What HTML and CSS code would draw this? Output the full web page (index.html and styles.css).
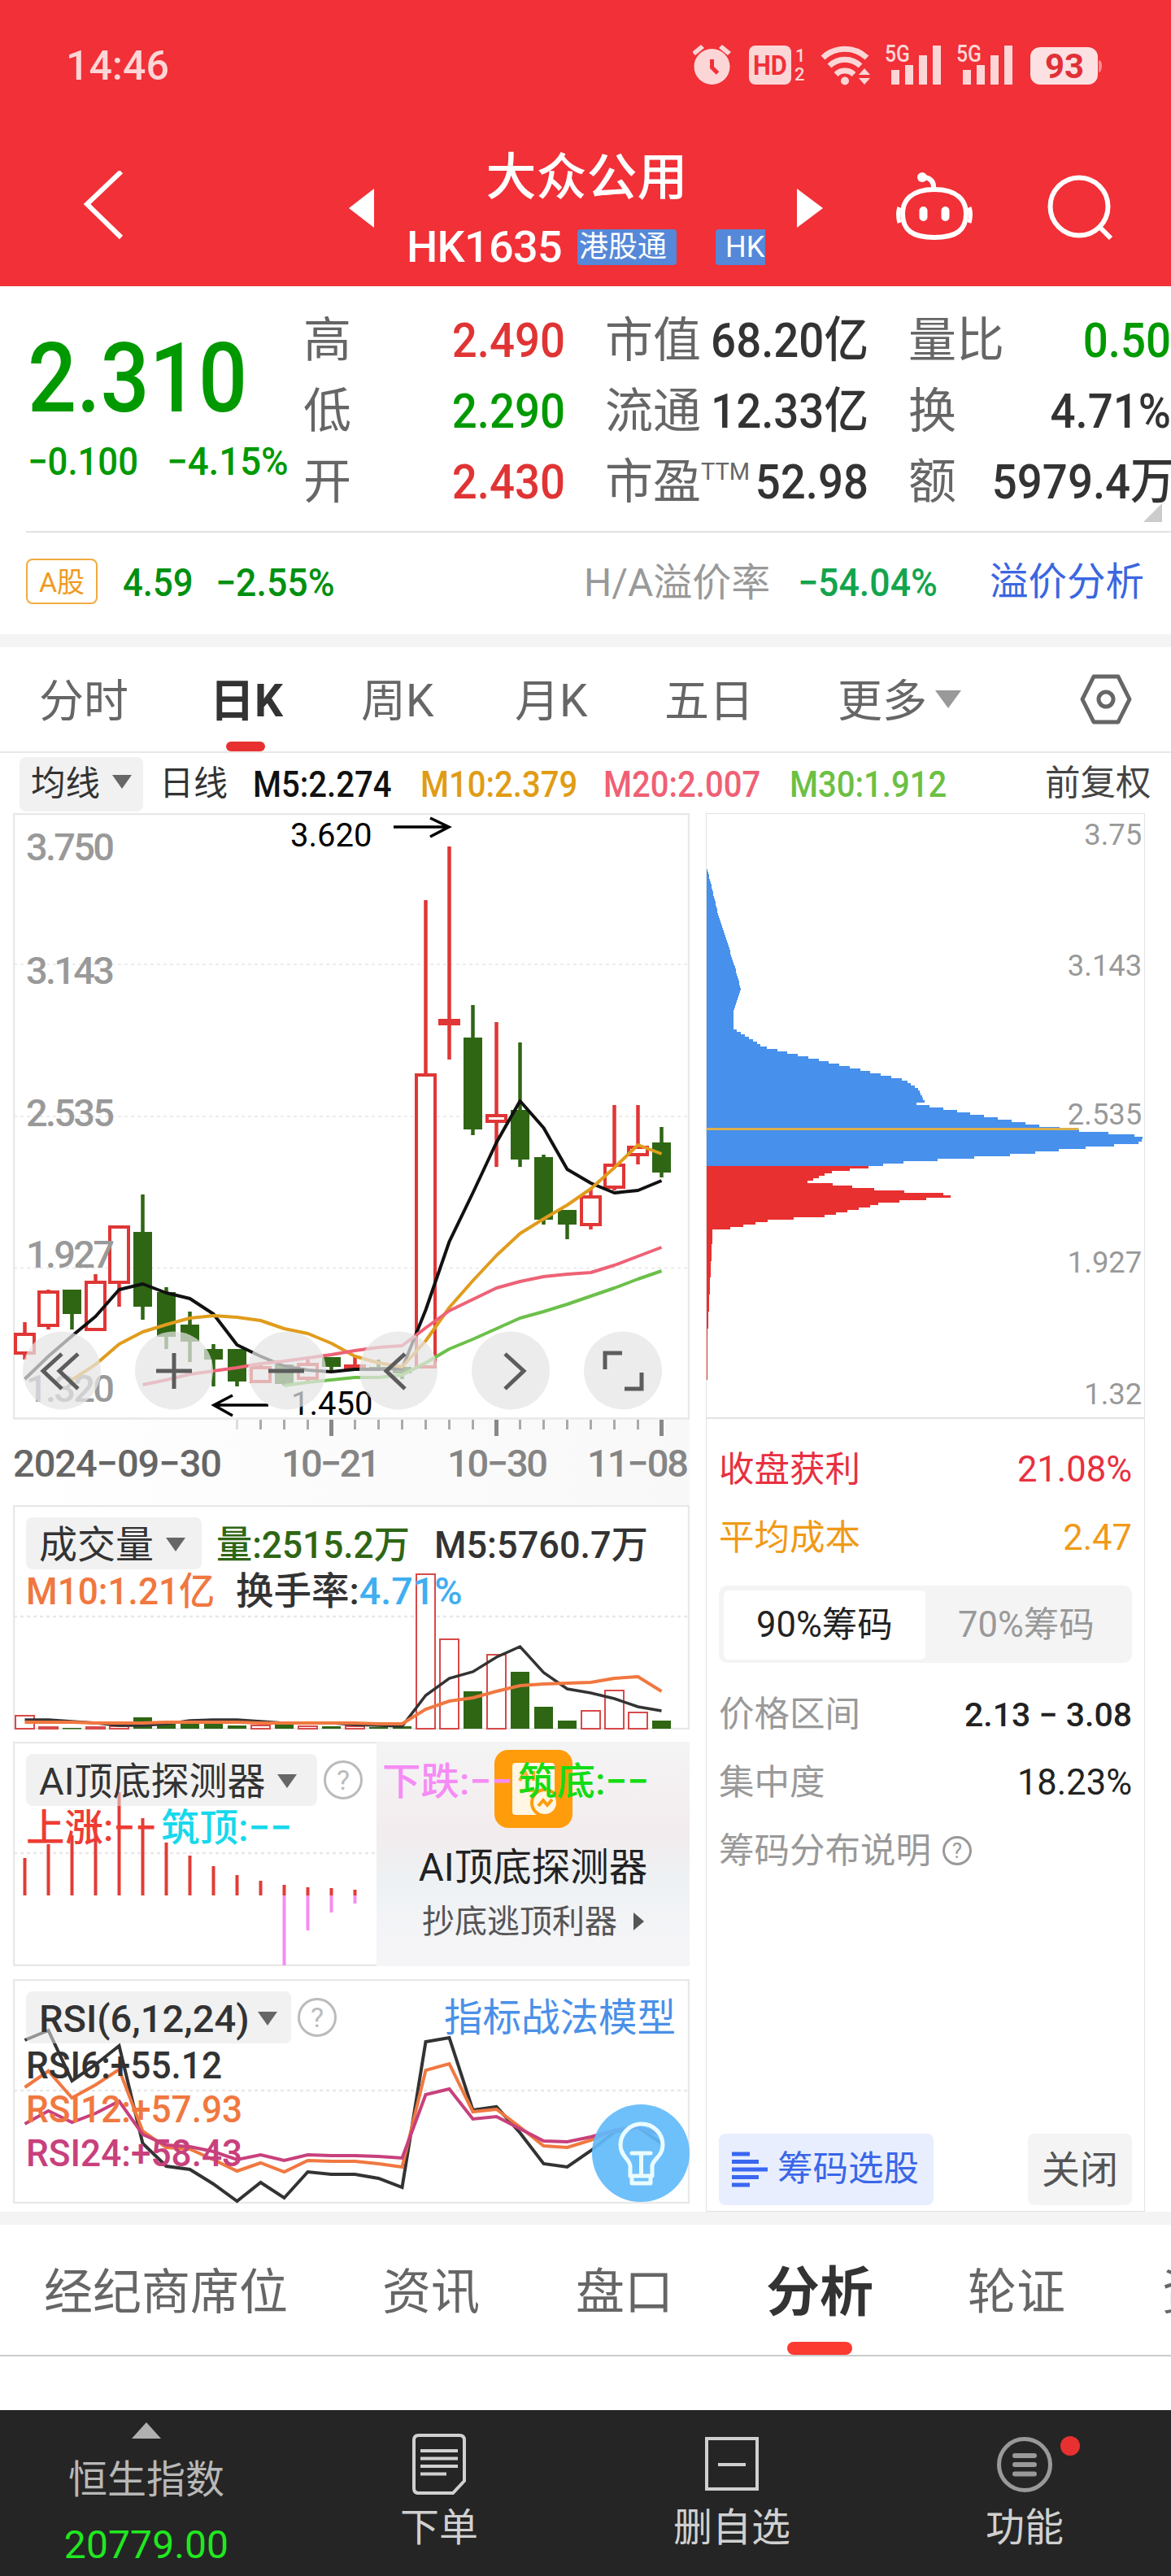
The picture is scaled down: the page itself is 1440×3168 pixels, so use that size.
FILE: index.html
```html
<!DOCTYPE html>
<html lang="zh-CN">
<head>
  <meta charset="UTF-8">
  <title>大众公用 HK1635</title>
  <meta name="viewport" content="width=device-width, initial-scale=1.0">
  <link rel="stylesheet" href="styles.css">
</head>
<body>

<header>
  <div class="status">
    <span class="clock">14:46</span>
    <svg class="status-icons" width="504" height="72" viewBox="852 44 504 72">
      <g fill="#fcd6d7">
        <circle cx="875.500" cy="82" r="22"/>
        <path d="M851 64l11-9 4 4-11 9zM899 64l-11-9-4 4 11 9z"/>
        <rect x="921" y="56" width="52" height="48" rx="8"/>
        <text class="tiny" x="978" y="76" font-size="22">1</text>
        <text class="tiny" x="977" y="99" font-size="22">2</text>
        <circle cx="1039" cy="99.500" r="5"/>
        <path d="M1063 84l7 8h-14zM1063 104l7-8h-14z"/>
        <text class="tiny" x="1088" y="76" font-size="29" font-weight="700" textLength="31" lengthAdjust="spacingAndGlyphs">5G</text>
        <path d="M1096 86h10v18h-10zM1113 80h10v24h-10zM1130 68h10v36h-10zM1147 56h10v48h-10z"/>
        <text class="tiny" x="1176" y="76" font-size="29" font-weight="700" textLength="31" lengthAdjust="spacingAndGlyphs">5G</text>
        <path d="M1184 86h10v18h-10zM1201 80h10v24h-10zM1218 68h10v36h-10zM1235 56h10v48h-10z"/>
      </g>
      <path d="M875.500 73v10l7 7" fill="none" stroke="#f13037" stroke-width="5"/>
      <text class="tiny heavy" x="926" y="92" font-size="33" fill="#f13037" textLength="42" lengthAdjust="spacingAndGlyphs">HD</text>
      <g fill="none" stroke="#fcd6d7" stroke-width="7">
        <path d="M1012 71a39 39 0 0 1 54 0M1020 81a27 27 0 0 1 38 0M1028 91.500a16 16 0 0 1 22 0"/>
      </g>
      <rect x="1267" y="58" width="83" height="46" rx="12" fill="#fde0e1"/>
      <path d="M1351 74q4 0 4 7t-4 8z" fill="#f88d91"/>
      <text class="tiny heavy" x="1285" y="96" font-size="42" fill="#e03038" textLength="48">93</text>
    </svg>
  </div>

  <div class="nav">
    <div class="back">
      <svg width="52" height="92" viewBox="100 211 52 92"><path d="M148 212L106 252L148 293" fill="none" stroke="#fff" stroke-width="6"/></svg>
    </div>
    <svg width="32" height="50" viewBox="0 0 32 50"><path d="M0 25L31 1V49z" fill="#fff"/></svg>
    <div class="stock">
      <h1>大众公用</h1>
      <div class="code"><span>HK1635</span><em>港股通</em><em class="hk">HK</em></div>
    </div>
    <svg width="32" height="50" viewBox="0 0 32 50"><path d="M32 25L0 1V49z" fill="#fff"/></svg>
    <svg width="96" height="88" viewBox="1100 212 96 88">
      <g fill="none" stroke="#fff" stroke-width="6">
        <path d="M1148 233C1177 233 1187 247 1187 263C1187 283 1175 292 1148 292S1109 283 1109 263C1109 247 1119 233 1148 233zM1147 232Q1148 220 1136 218"/>
        <path d="M1105 255q-3 8 0 19M1191 255q3 8 0 19" stroke-width="5"/>
        <path d="M1134.500 259v8M1161.500 259v8" stroke-width="10" stroke-linecap="round"/>
      </g>
      <circle cx="1133" cy="218" r="6" fill="#fff"/>
    </svg>
    <svg width="84" height="84" viewBox="1286 214 84 84">
      <g fill="none" stroke="#fff" stroke-width="6"><circle cx="1326" cy="254" r="35.500"/><path d="M1351 279L1365 293"/></g>
    </svg>
  </div>
</header>

<section class="quote">
  <div class="price">
    <strong class="din">2.310</strong>
    <p><span class="din">−0.100</span><span class="din pct">−4.15%</span></p>
  </div>
  <dl class="stats">
    <dt>高</dt><dd class="up">2.490</dd><dt>市值</dt><dd>68.20亿</dd><dt>量比</dt><dd class="down">0.50</dd>
    <dt>低</dt><dd class="down">2.290</dd><dt>流通</dt><dd>12.33亿</dd><dt>换</dt><dd>4.71%</dd>
    <dt>开</dt><dd class="up">2.430</dd><dt>市盈<sup>TTM</sup></dt><dd>52.98</dd><dt>额</dt><dd>5979.4万</dd>
  </dl>
  <i class="corner"></i>
</section>

<section class="premium">
  <span class="badge">A股</span>
  <span class="din">4.59</span>
  <span class="din pct">−2.55%</span>
  <span class="label">H/A溢价率</span>
  <span class="din rate">−54.04%</span>
  <a>溢价分析</a>
</section>

<nav class="periods">
  <span>分时</span><span class="on">日K</span><span>周K</span><span>月K</span><span>五日</span><span>更多<i class="caret light"></i></span>
  <svg width="66" height="64" viewBox="0 0 66 64"><g fill="none" stroke="#666" stroke-width="5" stroke-linejoin="round"><path d="M18 4H48L62 32L48 60H18L4 32z"/><circle cx="33" cy="32" r="9"/></g></svg>
</nav>

<div class="ma-row">
  <button>均线<i class="caret"></i></button>
  <span class="line">日线</span>
  <span class="din m5">M5:2.274</span>
  <span class="din m10">M10:2.379</span>
  <span class="din m20">M20:2.007</span>
  <span class="din m30">M30:1.912</span>
  <span class="adj">前复权</span>
</div>

<main>
  <div class="charts">
    <svg class="kline" id="kline" width="832" height="851" viewBox="16 1000 832 851">
      <defs>
        <linearGradient id="fade"><stop offset="0" stop-color="#fff"/><stop offset="1" stop-color="#f8f8f8"/></linearGradient>
      </defs>
      <rect x="16" y="1746" width="832" height="105" fill="url(#fade)"/>
      <rect x="17" y="1001" width="830" height="743.500" fill="#fff" stroke="#e8e8e8" stroke-width="2.500"/>
      <path d="M17 1186H847M17 1373H847M17 1559.500H847" stroke="#e6e6e6" stroke-width="1.500" stroke-dasharray="4 4"/>
      <g id="candles"></g>
      <g class="axis-label">
        <text x="32" y="1058" textLength="109">3.750</text>
        <text x="32" y="1210" textLength="109">3.143</text>
        <text x="32" y="1385" textLength="109">2.535</text>
        <text x="32" y="1559" textLength="109">1.927</text>
        <text x="32" y="1724" textLength="109">1.320</text>
      </g>
      <g id="averages" fill="none" stroke-linejoin="round"></g>
      <g class="extreme">
        <text x="357" y="1041">3.620</text>
        <text x="358" y="1740">1.450</text>
        <path d="M484 1017H552M529 1006L552 1017L529 1029M330 1728H263M286 1716L263 1728L286 1741"/>
      </g>
      <g id="ticks"></g>
      <g class="date">
        <text x="16" y="1816" textLength="257" fill="#666">2024−09−30</text>
        <text x="346" y="1816" textLength="122">10−21</text>
        <text x="550" y="1816" textLength="124">10−30</text>
        <text x="722" y="1816" textLength="125">11−08</text>
      </g>
      <g class="tools">
        <circle cx="76" cy="1685.500" r="48"/><circle cx="214" cy="1685.500" r="48"/><circle cx="353" cy="1685.500" r="48"/>
        <circle cx="490" cy="1685.500" r="48"/><circle cx="628" cy="1685.500" r="48"/><circle cx="766" cy="1685.500" r="48"/>
        <path d="M76 1665L53 1686L76 1708M96 1665L73 1686L96 1708"/>
        <path d="M192 1686H236M214 1664V1708M330 1686H374"/>
        <path d="M498 1665L475 1686L498 1708M621 1665L644 1686L621 1708"/>
        <path d="M744 1684V1664H765M768 1708H789V1688"/>
      </g>
    </svg>

    <div class="panel volume">
      <svg id="volume" width="832" height="276" viewBox="16 0 832 276"></svg>
      <div class="legend">
        <p><button>成交量<i class="caret"></i></button><span class="din vol">量:2515.2万</span><span class="din wide">M5:5760.7万</span></p>
        <p class="second"><span class="din orange">M10:1.21亿</span><span class="din turnover">换手率:<b>4.71%</b></span></p>
      </div>
    </div>

    <div class="panel detector">
      <svg id="detector" width="832" height="276" viewBox="16 0 832 276"></svg>
      <div class="promo">
        <svg width="96" height="96" viewBox="0 0 96 96">
          <rect width="96" height="96" rx="17" fill="#ff9c0c"/>
          <rect x="22" y="16" width="52" height="64" rx="4" fill="#fff6e4"/>
          <path d="M31 38l6-12 6 12M48 26v12M31 50h18" stroke="#ffab33" stroke-width="4" fill="none"/>
          <circle cx="62" cy="65" r="16" fill="#fff6e4" stroke="#ff9c0c" stroke-width="4"/>
          <path d="M54 69l6-7 5 6 6-7" stroke="#ff9c0c" stroke-width="4" fill="none"/>
        </svg>
        <h3>AI顶底探测器</h3>
        <p>抄底逃顶利器<i></i></p>
      </div>
      <div class="legend">
        <p><button>AI顶底探测器<i class="caret"></i></button><i class="help">?</i><span class="din fall">下跌:−−</span><span class="din bottom">筑底:−−</span></p>
        <p class="second"><span class="din rise">上涨:−−</span><span class="din top">筑顶:−−</span></p>
      </div>
    </div>

    <div class="panel rsi">
      <svg id="rsi" width="832" height="276" viewBox="16 0 832 276"></svg>
      <div class="legend">
        <p><button><span>RSI(6,12,24)</span><i class="caret"></i></button><i class="help">?</i><a>指标战法模型</a></p>
        <p class="second"><span class="din">RSI6:+55.12</span></p>
        <p class="second"><span class="din orange">RSI12:+57.93</span></p>
        <p class="second"><span class="din pink">RSI24:+58.43</span></p>
      </div>
      <svg class="bulb" width="120" height="120" viewBox="0 0 120 120">
        <circle cx="60" cy="60" r="60" fill="#62bbfb" opacity=".92"/>
        <g fill="none" stroke="#eafcff" stroke-width="5" stroke-linecap="round" stroke-linejoin="round">
          <path d="M47 88V76C47 68 35 64 35 50A26 26 0 0 1 87 50C87 64 74 68 74 76V88zM49 88V97H72V88"/>
          <path d="M49 60H72M60.500 60V85"/>
        </g>
      </svg>
    </div>
  </div>

  <aside>
    <svg id="chips" width="540" height="745" viewBox="0 0 540 745">
      <g class="chip-label">
        <text x="537" y="39">3.75</text><text x="537" y="201">3.143</text><text x="537" y="384">2.535</text>
        <text x="537" y="567">1.927</text><text x="537" y="729">1.32</text>
      </g>
    </svg>
    <div class="info">
      <p class="red"><span>收盘获利</span><span>21.08%</span></p>
      <p class="amber"><span>平均成本</span><span>2.47</span></p>
      <div class="switch"><span class="on">90%筹码</span><span>70%筹码</span></div>
      <p><span>价格区间</span><b class="range">2.13 − 3.08</b></p>
      <p><span>集中度</span><b class="thin">18.23%</b></p>
      <p><span>筹码分布说明<i class="help">?</i></span></p>
      <div class="actions">
        <button class="pick">
          <svg width="44" height="44" viewBox="0 0 44 44"><path d="M0 3H22M0 12.500H33M0 22H44M0 31.500H33M0 41H22" stroke="#3a66f0" stroke-width="5"/></svg>筹码选股
        </button>
        <button>关闭</button>
      </div>
    </div>
  </aside>
</main>

<nav class="sections">
  <span>经纪商席位</span><span>资讯</span><span>盘口</span><span class="on">分析</span><span>轮证</span><span>资金</span>
</nav>

<footer>
  <div class="index"><i></i><span>恒生指数</span><b>20779.00</b></div>
  <div>
    <svg width="66" height="76" viewBox="0 0 66 76"><g fill="none" stroke="#d0d0d0" stroke-width="4"><path d="M8 2H58Q64 2 64 8V58L50 73H8Q2 73 2 67V8Q2 2 8 2z"/><path d="M10 21H56M10 30.500H56M10 40H56M10 49.500H42"/></g></svg>
    <span>下单</span>
  </div>
  <div>
    <svg width="66" height="76" viewBox="0 0 66 76"><g fill="none" stroke="#d0d0d0" stroke-width="4"><path d="M2 6H64V68H2zM16 38H50"/></g></svg>
    <span>删自选</span>
  </div>
  <div>
    <svg width="138" height="76" viewBox="-36 0 138 76"><circle cx="33" cy="38" r="31.500" fill="none" stroke="#999" stroke-width="5"/><path d="M21 27H45M21 38H45M21 49.500H45" stroke="#999" stroke-width="6" stroke-linecap="round"/><circle cx="89" cy="15" r="12" fill="#e83030"/></svg>
    <span>功能</span>
  </div>
</footer>

<script src="script.js"></script>
</body>
</html>
```
FILE: styles.css
```css
* {
  box-sizing: border-box;
}
body {
  margin: 0;
  width: 1440px;
  height: 3168px;
  overflow: hidden;
  background: #fff;
  color: #333;
  font-family: Roboto, "Noto Sans CJK SC", sans-serif;
  font-size: 48px;
  line-height: 1;
}
h1, h3, p, dl, dd {
  margin: 0;
}
svg {
  display: block;
}
i, em {
  font-style: normal;
}
button {
  border: 0;
  padding: 0;
  font: inherit;
  color: inherit;
  background: rgba(229, 229, 229, 0.55);
  border-radius: 8px;
}

/* narrow figures */
.din {
  display: inline-block;
  font-weight: 500;
  white-space: nowrap;
  transform: scaleX(0.91);
  transform-origin: left;
}

header {
  height: 352px;
  background: #f13037;
  color: #fff;
}
.status {
  display: flex;
  justify-content: space-between;
  align-items: center;
  height: 160px;
  padding: 0 84px 0 81px;
}
.clock {
  padding-top: 1px;
  font-size: 50px;
  font-weight: 500;
  color: #fcd6d7;
}
.tiny {
  font-family: Roboto, sans-serif;
  font-weight: 500;
}
.heavy {
  font-weight: 700;
}
.nav {
  display: grid;
  grid-template-columns: 429px 73px 478px 121px 186px 153px;
  align-items: center;
  height: 192px;
}
.back {
  padding-left: 101px;
}
.stock {
  width: 439px;
}
.stock h1 {
  margin-bottom: 16px;
  font-size: 62px;
  line-height: 80px;
  font-weight: 500;
  text-align: center;
}
.code {
  display: flex;
  align-items: center;
  height: 58px;
  overflow: hidden;
  white-space: nowrap;
}
.code span {
  width: 208px;
  margin-left: -2px;
  margin-right: 2px;
  font-size: 54px;
  font-weight: 500;
  letter-spacing: -0.7px;
  line-height: 58px;
}
.code em {
  width: 122px;
  height: 44px;
  margin-right: 48px;
  padding-left: 2px;
  border-radius: 4px;
  background: #5588d8;
  font-size: 36px;
  line-height: 44px;
}
.code .hk {
  flex: 1;
  margin: 0;
  padding-left: 12px;
  overflow: hidden;
  border-radius: 4px 0 0 4px;
}

.quote {
  display: grid;
  grid-template-columns: 341px 1fr;
  height: 303px;
  margin-left: 32px;
  padding-top: 22px;
  border-bottom: 2px solid #e2e2e2;
  position: relative;
}
.price {
  padding-top: 32px;
  color: #009900;
}
.price strong {
  font-size: 119px;
  line-height: 119px;
  transform: scaleX(0.89);
}
.price p {
  display: flex;
  gap: 20px;
  margin-top: 19px;
  font-size: 48px;
}
.price .din {
  margin-left: 2px;
}
.price .pct {
  transform: scaleX(0.95);
}
.stats {
  display: grid;
  grid-template-columns: 82px 240px 134px 239px 130px 242px;
  grid-auto-rows: 87px;
  font-size: 60px;
  line-height: 90px;
  white-space: nowrap;
}
.stats dt {
  font-size: 59px;
  color: #666;
}
.stats dt:nth-of-type(3n+2), .stats dt:nth-of-type(3n) {
  padding-left: 49px;
}
.stats sup {
  font-size: 29px;
  line-height: 0;
  vertical-align: 23px;
}
.stats dd {
  font-weight: 500;
  text-align: right;
  transform: scaleX(0.91);
  transform-origin: right;
}
.stats .up {
  color: #e03434;
}
.stats .down {
  color: #009900;
}
.corner {
  position: absolute;
  right: 11px;
  bottom: 11px;
  border-left: 23px solid transparent;
  border-bottom: 23px solid #ccc;
}

.premium {
  display: grid;
  grid-template-columns: 119px 114px 453px 263px 236px 1fr;
  align-items: center;
  height: 125px;
  padding: 0 0 1px 32px;
  color: #009010;
  white-space: nowrap;
}
.badge {
  width: 88px;
  height: 56px;
  margin-bottom: 5px;
  border: 2px solid #f0ab40;
  border-radius: 8px;
  color: #f09a20;
  font-size: 34px;
  line-height: 54px;
  text-align: center;
}
.premium .pct {
  transform: scaleX(0.93);
}
.premium .label {
  color: #999;
}
.premium .rate {
  color: #13a44e;
  transform: scaleX(0.93);
}
.premium a {
  color: #3b66e0;
  font-size: 47.5px;
}

.periods {
  display: grid;
  grid-template-columns: 214px 182px 189px 184px 213px 297px 66px;
  align-items: center;
  height: 146px;
  padding-left: 48px;
  border-top: 16px solid #f4f4f4;
  border-bottom: 2px solid #e8e8e8;
  color: #666;
  font-size: 55px;
}
.periods span {
  height: 128px;
  line-height: 133px;
}
.periods .on {
  position: relative;
  left: -4px;
  color: #333;
  font-weight: 700;
}
.periods .on::after, .sections .on::after {
  content: "";
  position: absolute;
  left: 20px;
  bottom: 0;
  width: 48px;
  height: 12px;
  border-radius: 6px;
  background: #e83030;
}
.caret {
  display: inline-block;
  margin-left: 15px;
  vertical-align: 8px;
  border: 12px solid transparent;
  border-top: 17px solid #666;
  border-bottom: 0;
}
.caret.light {
  margin-left: 10px;
  vertical-align: 10px;
  border-width: 22px 16px 0;
  border-top-color: #999;
}

.ma-row {
  display: grid;
  grid-template-columns: 172px 115px 206px 225px 229px 314px 1fr;
  align-items: center;
  height: 74px;
  padding: 2px 0 0 24px;
  font-size: 44px;
  white-space: nowrap;
}
.ma-row button {
  width: 152px;
  height: 67px;
  font-size: 42.5px;
}
.ma-row .line {
  font-size: 42px;
}
.ma-row .din {
  padding-top: 2px;
}
.m5 { color: #111; }
.m10 { color: #e09c14; }
.m20 { color: #f06074; }
.m30 { color: #6cc044; }
.adj {
  font-size: 43.5px;
  color: #444;
}

main {
  display: grid;
  grid-template-columns: 852px 540px;
  height: 1720px;
  padding-left: 16px;
}
.axis-label text, .date text {
  font-family: Roboto, sans-serif;
  font-weight: 500;
  font-size: 47px;
  fill: #999;
}
.date text {
  fill: #858585;
}
.date text:first-child {
  fill: #666;
}
.extreme text {
  font-size: 40px;
}
.extreme path {
  fill: none;
  stroke: #000;
  stroke-width: 3.5;
}
.tools circle {
  fill: rgba(228, 228, 228, 0.72);
}
.tools path {
  fill: none;
  stroke: #5c5c5c;
  stroke-width: 5;
}
.panel {
  display: grid;
  width: 832px;
  height: 276px;
}
.panel > * {
  grid-area: 1 / 1;
}
.detector {
  margin-top: 15px;
}
.rsi {
  margin-top: 16px;
}
.legend {
  padding: 15px 0 0 16px;
  font-size: 47px;
  white-space: nowrap;
}
.legend .din {
  transform: scaleX(0.94);
}
.legend p {
  display: flex;
  align-items: center;
  height: 64px;
}
.legend p > span, .legend p > a {
  padding-top: 3px;
}
.legend .second {
  height: 54px;
}
.legend .second .din {
  margin-top: -5px;
}
.legend button {
  height: 64px;
  width: 216px;
  margin-right: 18px;
  padding: 2px 0 0 16px;
  text-align: left;
}
.volume .vol {
  width: 268px;
  color: #2f6614;
}
.legend .wide {
  transform: scaleX(0.96);
}
.volume .second .orange {
  width: 258px;
}
.legend .turnover {
  transform: scaleX(0.99);
}
.volume b {
  font-weight: 500;
  color: #40aef0;
}
.orange { color: #f07840; }
.pink { color: #c8407c; }
.detector button {
  width: 358px;
  margin-right: 8px;
}
.help {
  display: inline-block;
  width: 48px;
  height: 48px;
  border: 3px solid #bbb;
  border-radius: 50%;
  color: #bbb;
  font-size: 34px;
  line-height: 43px;
  text-align: center;
}
.legend .fall, .legend .bottom, .legend .rise, .legend .top {
  transform: scaleX(1.01);
}
.detector .fall {
  width: 167px;
  margin-left: 24px;
  color: #f58cf5;
}
.bottom { color: #14dc14; }
.detector .rise {
  width: 166px;
  color: #ee3c34;
}
.top { color: #18d8ec; }
.promo {
  justify-self: end;
  display: flex;
  flex-direction: column;
  align-items: center;
  width: 385px;
  padding-top: 10px;
  background: linear-gradient(#f4f4f5, #f3ecee 40%, #edf1f3 62%, #f5f5f8 90%);
}
.promo h3 {
  margin-top: 26px;
  font-size: 47.5px;
  font-weight: 400;
  color: #222;
}
.promo p {
  margin-top: 22px;
  font-size: 40px;
  color: #555;
}
.promo i {
  display: inline-block;
  margin-left: 20px;
  border: 11px solid transparent;
  border-left: 13px solid #555;
  border-right: 0;
  vertical-align: 3px;
}
.rsi button {
  width: 326px;
  margin-right: 8px;
}
.rsi button span {
  display: inline-block;
  font-weight: 500;
}
.rsi .caret {
  margin-left: 10px;
}
.rsi a {
  margin-left: auto;
  padding-right: 17px;
  color: #4a90e8;
  font-size: 47.5px;
}
.bulb {
  place-self: end;
  margin-bottom: 2px;
}

aside {
  border: 1.5px solid #e2e2e2;
  width: 540px;
  position: relative;
}
#chips {
  margin: -1px;
  border-bottom: 2px solid #e2e2e2;
}
.chip-label text {
  font-size: 36.5px;
  text-anchor: end;
  fill: #999;
}
.info {
  padding: 22px 15px 0;
  font-size: 43.5px;
}
.info p {
  display: flex;
  justify-content: space-between;
  line-height: 84px;
  height: 84px;
  color: #999;
}
.info .red { color: #e83040; }
.info .amber { color: #f09a18; }
.info b {
  font-weight: 500;
  color: #222;
}
.info .range {
  font-size: 41px;
}
.info .thin {
  font-weight: 400;
}
.info .help {
  width: 36px;
  height: 36px;
  margin-left: 14px;
  color: #999;
  border-color: #999;
  font-size: 26px;
  line-height: 31px;
  vertical-align: 6px;
}
.switch {
  display: grid;
  grid-template-columns: 248px 1fr;
  height: 95px;
  margin: 16px 0 22px;
  padding: 6px;
  border-radius: 10px;
  background: #f4f4f4;
  color: #999;
  line-height: 85px;
  text-align: center;
}
.switch .on {
  border-radius: 6px;
  background: #fff;
  color: #222;
}
.actions {
  display: flex;
  justify-content: space-between;
  margin-top: 305px;
}
.actions button {
  width: 128px;
  height: 88px;
  background: #f4f4f4;
  color: #555;
  font-size: 47px;
}
.actions .pick {
  display: flex;
  align-items: center;
  gap: 12px;
  width: 264px;
  padding-left: 16px;
  background: #e8eefe;
  color: #3a66e8;
  font-size: 43.5px;
}

.sections {
  display: grid;
  grid-template-columns: 416px 238px 234px 248px 239px 1fr;
  height: 178px;
  padding-left: 54px;
  border-top: 16px solid #f4f4f4;
  border-bottom: 2px solid #ccc;
  overflow: hidden;
  color: #666;
  font-size: 60px;
  line-height: 167px;
  white-space: nowrap;
}
.sections span {
  height: 160px;
}
.sections .on {
  position: relative;
  color: #333;
  font-size: 66px;
  font-weight: 700;
}
.sections .on::after {
  left: 26px;
  width: 80px;
  height: 16px;
  border-radius: 8px;
  background: #fb3a30;
}

footer {
  display: grid;
  grid-template-columns: repeat(4, 360px);
  height: 204px;
  margin-top: 66px;
  background: #252525;
  color: #d0d0d0;
}
footer div {
  display: flex;
  flex-direction: column;
  align-items: center;
  padding-top: 29px;
}
footer svg {
  margin-bottom: 16px;
}
footer .index {
  padding-top: 15px;
  color: #b8b8b8;
}
.index i {
  border: 18px solid transparent;
  border-bottom: 20px solid #b0b0b0;
  border-top: 0;
}
.index span {
  margin-top: 27px;
}
.index b {
  margin-top: 32px;
  font-weight: 400;
  letter-spacing: 0.1px;
  color: #20e820;
}
```
FILE: script.js
```js
const NS = "http://www.w3.org/2000/svg";
const RED = "#e03636";
const GREEN = "#2f6614";
const x = (i) => 30.5 + 29 * i;

function add(parent, tag, attrs) {
  const el = document.createElementNS(NS, tag);
  for (const key in attrs) el.setAttribute(key, attrs[key]);
  parent.appendChild(el);
  return el;
}

function line(parent, values, color, width, start = 0, top = 0) {
  add(parent, "polyline", {
    points: values.map((v, i) => x(i + start) + "," + (v + top)).join(" "),
    fill: "none", stroke: color, "stroke-width": width
  });
}

function frame(svg) {
  add(svg, "rect", { x: 17, y: 1, width: 830, height: 274, fill: "#fff", stroke: "#e8e8e8", "stroke-width": 2.5 });
  add(svg, "path", { d: "M17 137H847", stroke: "#e8e8e8", "stroke-width": 2.5, "stroke-dasharray": "4 4" });
}

// up?, high, body top, body bottom, low
const candles = [
  [1, 626, 641, 664, 672], [1, 586, 589, 630, 635], [0, 586, 586, 616, 635], [1, 567, 577, 635, 636],
  [1, 508, 509, 577, 607], [0, 469, 515, 607, 623], [0, 583, 589, 644, 659], [0, 613, 629, 650, 675],
  [0, 653, 659, 672, 705], [0, 659, 659, 699, 705], [1, 679, 682, 699, 701], [0, 678, 678, 702, 704],
  [1, 672, 678, 695, 698], [0, 669, 669, 681, 687], [1, 668, 680, 682, 684], [0, 672, 681, 684, 685],
  [0, 681, 681, 689, 696], [1, 107, 322, 681, 682], [1, 41, 255, 259, 303], [0, 236, 276, 389, 396],
  [1, 257, 372, 379, 435], [0, 282, 365, 426, 435], [0, 420, 423, 500, 506], [0, 488, 488, 506, 524],
  [1, 462, 472, 506, 512], [1, 359, 433, 460, 464], [1, 359, 411, 420, 432], [0, 386, 405, 442, 448]
];
const candleGroup = document.getElementById("candles");
candles.forEach(([up, high, top, bottom, low], i) => {
  const color = up ? RED : GREEN;
  add(candleGroup, "path", {
    d: `M${x(i)} ${1000 + high}V${1000 + top}M${x(i)} ${1000 + bottom}V${1000 + low}`,
    stroke: color, "stroke-width": 4.5
  });
  add(candleGroup, "rect", {
    x: x(i) - 11.5, y: 1000 + top, width: 23, height: bottom - top,
    fill: up ? "#fff" : color, stroke: up ? color : "none", "stroke-width": 4
  });
});

const averages = document.getElementById("averages");
line(averages, [696, 668, 643, 619, 586, 579, 590, 597, 616, 654, 668, 680, 685, 687, 684, 684, 683, 611, 527, 467, 405, 354, 387, 438, 455, 467, 464, 452], "#111", 4, 0, 1000);
line(averages, [697, 678, 653, 638, 629, 621, 618, 620, 624, 634, 640, 652, 668, 676, 681, 649, 608, 575, 544, 517, 499, 482, 462, 436, 408, 419], "#e09c1c", 4, 2, 1000);
line(averages, [703, 697, 690, 686, 682, 677, 674, 670, 666, 661, 657, 655, 633, 612, 598, 584, 576, 570, 567, 565, 556, 545, 534], "#ee6276", 4, 5, 1000);
line(averages, [704, 700, 697, 694, 694, 691, 676, 659, 647, 634, 621, 613, 604, 594, 584, 573, 563], "#6cc04a", 4, 11, 1000);

const ticks = document.getElementById("ticks");
for (let i = 9; i < 28; i++) {
  const major = i % 7 === 6;
  add(ticks, "path", {
    d: `M${x(i)} 1746v${major ? 20 : 12}`,
    stroke: i === 9 ? "#ddd" : major ? "#888" : "#aaa", "stroke-width": major ? 5 : 3
  });
}

// volume
const volume = document.getElementById("volume");
frame(volume);
const bars = [259, 273, 274, 273, 272, 261, 269, 268, 268, 271, 271, 270, 272, 272, 272, 273, 272, 85, 165, 229, 184, 205, 248, 265, 253, 228, 255, 265];
bars.forEach((top, i) => {
  const up = candles[i][0];
  add(volume, "rect", {
    x: x(i) - 11.5, y: top, width: 23, height: Math.max(275 - top, 1.5),
    fill: up ? "#fff" : GREEN, stroke: up ? "#d84a4a" : "none", "stroke-width": 2
  });
});
line(volume, [264, 264, 266, 268, 271, 271, 269, 265, 264, 264, 266, 268, 268, 268, 270, 271, 272, 234, 213, 205, 187, 174, 206, 226, 231, 238, 248, 253], "#333", 3.5);
line(volume, [267, 267, 267, 268, 268, 268, 267, 267, 267, 267, 268, 268, 268, 268, 268, 269, 269, 251, 241, 237, 229, 222, 220, 219, 218, 213, 211, 229], "#f07840", 4);

// rise and fall strength
const detector = document.getElementById("detector");
frame(detector);
[143, 126, 115, 92, 62, 94, 124, 140, 153, 164, 171, 176, 179, 180, 182].forEach((top, i) => {
  add(detector, "path", { d: `M${x(i)} ${top}V189`, stroke: "#e23c36", "stroke-width": 4 });
});
[275, 232, 210, 199].forEach((bottom, i) => {
  add(detector, "path", { d: `M${x(i + 11)} 189V${bottom}`, stroke: "#f58cf0", "stroke-width": 4 });
});

const rsi = document.getElementById("rsi");
frame(rsi);
line(rsi, [75, 63, 125, 105, 82, 202, 230, 234, 252, 273, 250, 269, 237, 240, 240, 245, 256, 77, 72, 161, 157, 189, 227, 231, 211, 188, 182, 202], "#333", 4);
line(rsi, [133, 113, 146, 130, 111, 187, 207, 209, 222, 236, 226, 237, 223, 224, 224, 227, 231, 112, 104, 163, 160, 182, 205, 207, 198, 186, 182, 192], "#f07840", 4);
line(rsi, [178, 162, 176, 165, 150, 191, 204, 206, 212, 222, 216, 223, 216, 217, 217, 218, 220, 142, 135, 172, 169, 184, 199, 200, 194, 186, 182, 191], "#c8407c", 4);

// chip distribution: [y, width]
const knots = [
  [63, 0], [121, 14], [181, 33], [216, 42.5], [244, 33], [264, 33], [287, 70], [328, 245], [339, 261], [355, 269],
  [357, 259], [360, 275], [384, 410], [387, 435], [390, 460], [392, 485], [394.5, 512], [397, 538], [401, 538], [405, 533], [408, 503],
  [410.5, 473], [416, 413], [419, 389], [422, 345], [425, 300], [428, 254], [430.5, 226], [434, 207], [439, 169],
  [441.5, 151], [453, 125], [455, 148], [458, 172], [461, 195], [464, 230], [466.5, 266], [468.5, 301], [471.5, 301], [474, 271],
  [476.5, 243], [479.5, 213], [483, 202], [496, 141], [498, 108], [501, 75], [508, 41], [511, 24], [512.5, 7],
  [526, 7], [599, 3.5], [641, 1.5], [720, 0.5]
];
const chips = document.getElementById("chips");
const labels = chips.querySelector(".chip-label");
const step = 3;
for (let y = 63; y < 720; y += step) {
  const k = knots.findIndex((p) => p[0] > y);
  if (k < 1) continue;
  const [y0, w0] = knots[k - 1];
  const [y1, w1] = knots[k];
  const bar = add(chips, "rect", {
    x: 0, y, width: w0 + (w1 - w0) * (y - y0) / (y1 - y0), height: step,
    fill: y < 432.5 ? "#4790ec" : "#e83030", "shape-rendering": "crispEdges"
  });
  chips.insertBefore(bar, labels);
}
add(chips, "path", { d: "M0 389.5H459", stroke: "#ddb04c", "stroke-width": 3 });
```
